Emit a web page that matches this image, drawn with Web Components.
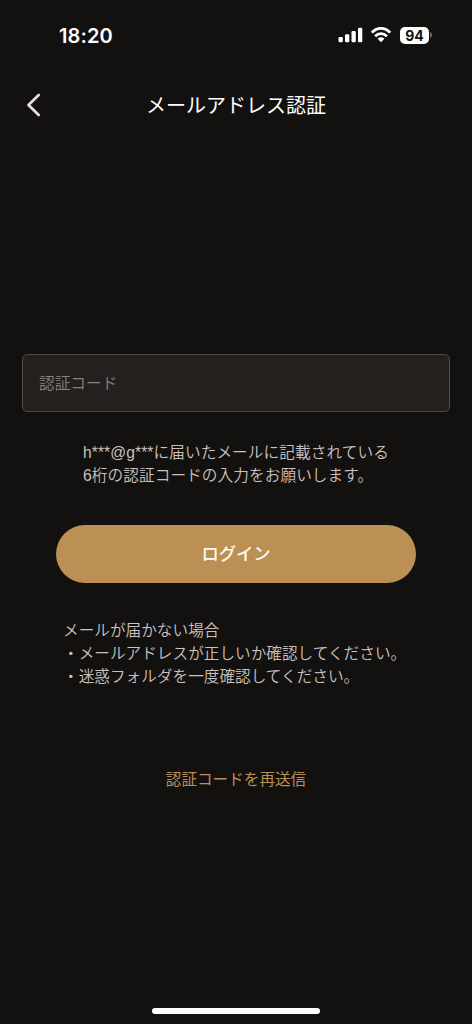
<!DOCTYPE html>
<html lang="ja">
<head>
<meta charset="utf-8">
<title>メールアドレス認証</title>
<style>
html,body{margin:0;background:#12110f}
body{font-family:"Liberation Sans","Noto Sans CJK JP",sans-serif;color:#cbc1bf}
</style>
</head>
<body>
<auth-screen></auth-screen>
<script>
const define = (name, html) => customElements.define(name, class extends HTMLElement {
  constructor() {
    super();
    this.attachShadow({mode: "open"}).innerHTML = html;
  }
});

define("status-bar", `
<style>
:host{display:flex;height:70px;align-items:center;justify-content:space-between;padding:0 40px 0 59px;box-sizing:border-box;color:#fff;font-family:Inter,sans-serif}
time{font-size:20px;font-weight:600;line-height:24px;letter-spacing:.1px;padding-top:1px}
.icons{display:flex;align-items:center}
svg{display:block}
.wifi{margin-left:8px}
.battery{margin-left:9px;width:29px;height:17px;border-radius:5px;background:#fff;color:#161412;font-size:14px;font-weight:700;line-height:17px;text-align:center}
.cap{margin-left:1px}
</style>
<time>18:20</time>
<div class="icons">
<svg width="25" height="16" viewBox="0 0 25 16" fill="#fff"><rect x=".5" y="10" width="4.3" height="5.2" rx="1.2"/><rect x="7" y="7.2" width="4.3" height="8" rx="1.2"/><rect x="13.5" y="4" width="4.3" height="11.2" rx="1.2"/><rect x="20" y=".8" width="4.3" height="14.4" rx="1.2"/></svg>
<svg class="wifi" width="20" height="16" viewBox="0 0 20 16"><g fill="none" stroke="#fff" stroke-width="2.8"><path d="M.9 5.7C6-.1 14-.1 19.1 5.7"/><path d="M4.1 9.3C7.6 5.6 12.4 5.6 15.9 9.3"/></g><path d="M6.6 11.7c2-1.8 4.8-1.8 6.8 0L10 15.2Z" fill="#fff"/></svg>
<div class="battery">94</div>
<svg class="cap" width="2" height="6" viewBox="0 0 2 6"><path d="M0 0Q2 1 2 3T0 6Z" fill="#77736f"/></svg>
</div>`);

define("nav-header", `
<style>
:host{display:grid;grid-template-columns:52px 1fr 52px;align-items:center;height:70px}
svg{display:block;margin-left:26px}
h1{margin:0;padding-top:2px;text-align:center;font-size:20px;line-height:30px;font-weight:400;color:#fff}
</style>
<svg width="16" height="24" viewBox="0 0 16 24"><path d="M12.7 2 2.5 12 12.7 22" fill="none" stroke="#eadddd" stroke-width="2.7" stroke-linecap="round" stroke-linejoin="round"/></svg>
<h1><slot></slot></h1>`);

define("code-field", `
<style>
:host{display:flex;align-items:center;height:58px;box-sizing:border-box;margin:214px 22px 0;padding:0 16px;border:1.5px solid #4e4a48;border-radius:5px;background:#24201e;color:#878281;font-size:15.7px;line-height:22px;font-weight:350}
span{padding-top:1px}
</style><span><slot></slot></span>`);

define("text-line", `
<style>:host{display:block;font-size:15.65px;line-height:23px;white-space:nowrap;font-weight:350}</style><slot></slot>`);

define("note-block", `
<style>:host{display:block}</style><slot></slot>`);

define("primary-button", `
<style>
:host{display:block;margin:38px 56px 0}
button{display:block;width:100%;height:58px;border:0;border-radius:29px;padding:0;background:#bc8f55;color:#fffaf2;font:500 17.3px/26px "Liberation Sans","Noto Sans CJK JP",sans-serif}
</style><button><slot></slot></button>`);

define("resend-link", `
<style>
:host{display:block;margin-top:80px;text-align:center;font-size:15.6px;line-height:24px;font-weight:400;color:#bc8d53}
</style><slot></slot>`);

define("home-indicator", `
<style>:host{display:block;width:168px;height:6px;border-radius:3px;background:#fff;margin:auto auto 10px}</style>`);

define("auth-screen", `
<style>
:host{display:flex;flex-direction:column;height:1024px;background:#12110f;overflow:hidden}
.sent{margin:29px 0 0 83px;letter-spacing:.08px}
.help{margin:36px 0 0 63px}
</style>
<status-bar></status-bar>
<nav-header>メールアドレス認証</nav-header>
<code-field>認証コード</code-field>
<note-block class="sent"><text-line>h***@g***に届いたメールに記載されている</text-line><text-line>6桁の認証コードの入力をお願いします。</text-line></note-block>
<primary-button>ログイン</primary-button>
<note-block class="help"><text-line>メールが届かない場合</text-line><text-line>・メールアドレスが正しいか確認してください。</text-line><text-line>・迷惑フォルダを一度確認してください。</text-line></note-block>
<resend-link>認証コードを再送信</resend-link>
<home-indicator></home-indicator>`);
</script>
</body>
</html>
